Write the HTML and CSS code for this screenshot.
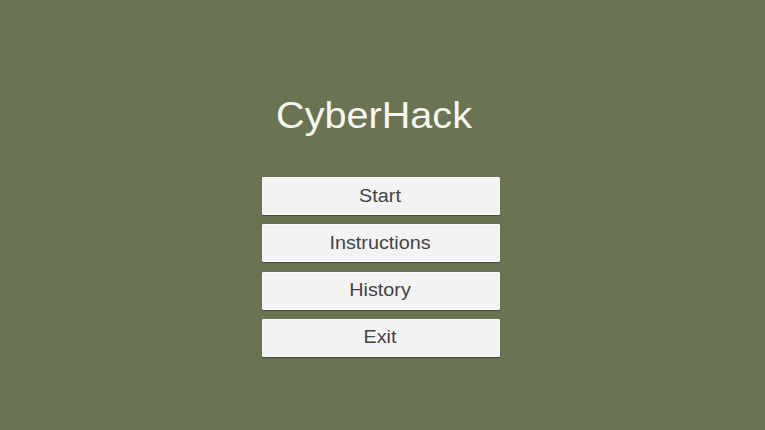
FILE: index.html
```html
<!DOCTYPE html>
<html>
<head>
<meta charset="utf-8">
<link rel="stylesheet" href="styles.css">
</head>
<body>
<main class="menu">
  <h1 class="title">CyberHack</h1>
  <nav class="buttons">
    <button class="btn"><span class="label">Start</span></button>
    <button class="btn"><span class="label">Instructions</span></button>
    <button class="btn"><span class="label">History</span></button>
    <button class="btn"><span class="label">Exit</span></button>
  </nav>
</main>
</body>
</html>
```

FILE: styles.css
```css
html, body {
  margin: 0;
  padding: 0;
  height: 100%;
}
body {
  background: #6a7453;
  font-family: "Liberation Sans", Arial, sans-serif;
}
.menu {
  display: flex;
  flex-direction: column;
  align-items: center;
  padding-top: 92px;
  padding-right: 4px;
}
.title {
  margin: 0 13px 0 0;
  color: #f7f7f2;
  font-weight: normal;
  font-size: 36px;
  line-height: 48px;
  height: 48px;
  transform: scaleX(1.1);
}
.buttons {
  display: flex;
  flex-direction: column;
  gap: 9.3px;
  margin-top: 37px;
}
.btn {
  width: 238px;
  height: 38px;
  box-sizing: border-box;
  background: #f3f3f3;
  border: 1px solid #fbfbfb;
  border-radius: 1px;
  box-shadow: 0 1px 1px rgba(0, 0, 0, 0.35);
  color: #444444;
  font-family: "Liberation Sans", Arial, sans-serif;
  font-size: 18px;
  padding: 0;
  margin: 0;
}
.label {
  display: inline-block;
  transform: scaleX(1.1);
}
```
